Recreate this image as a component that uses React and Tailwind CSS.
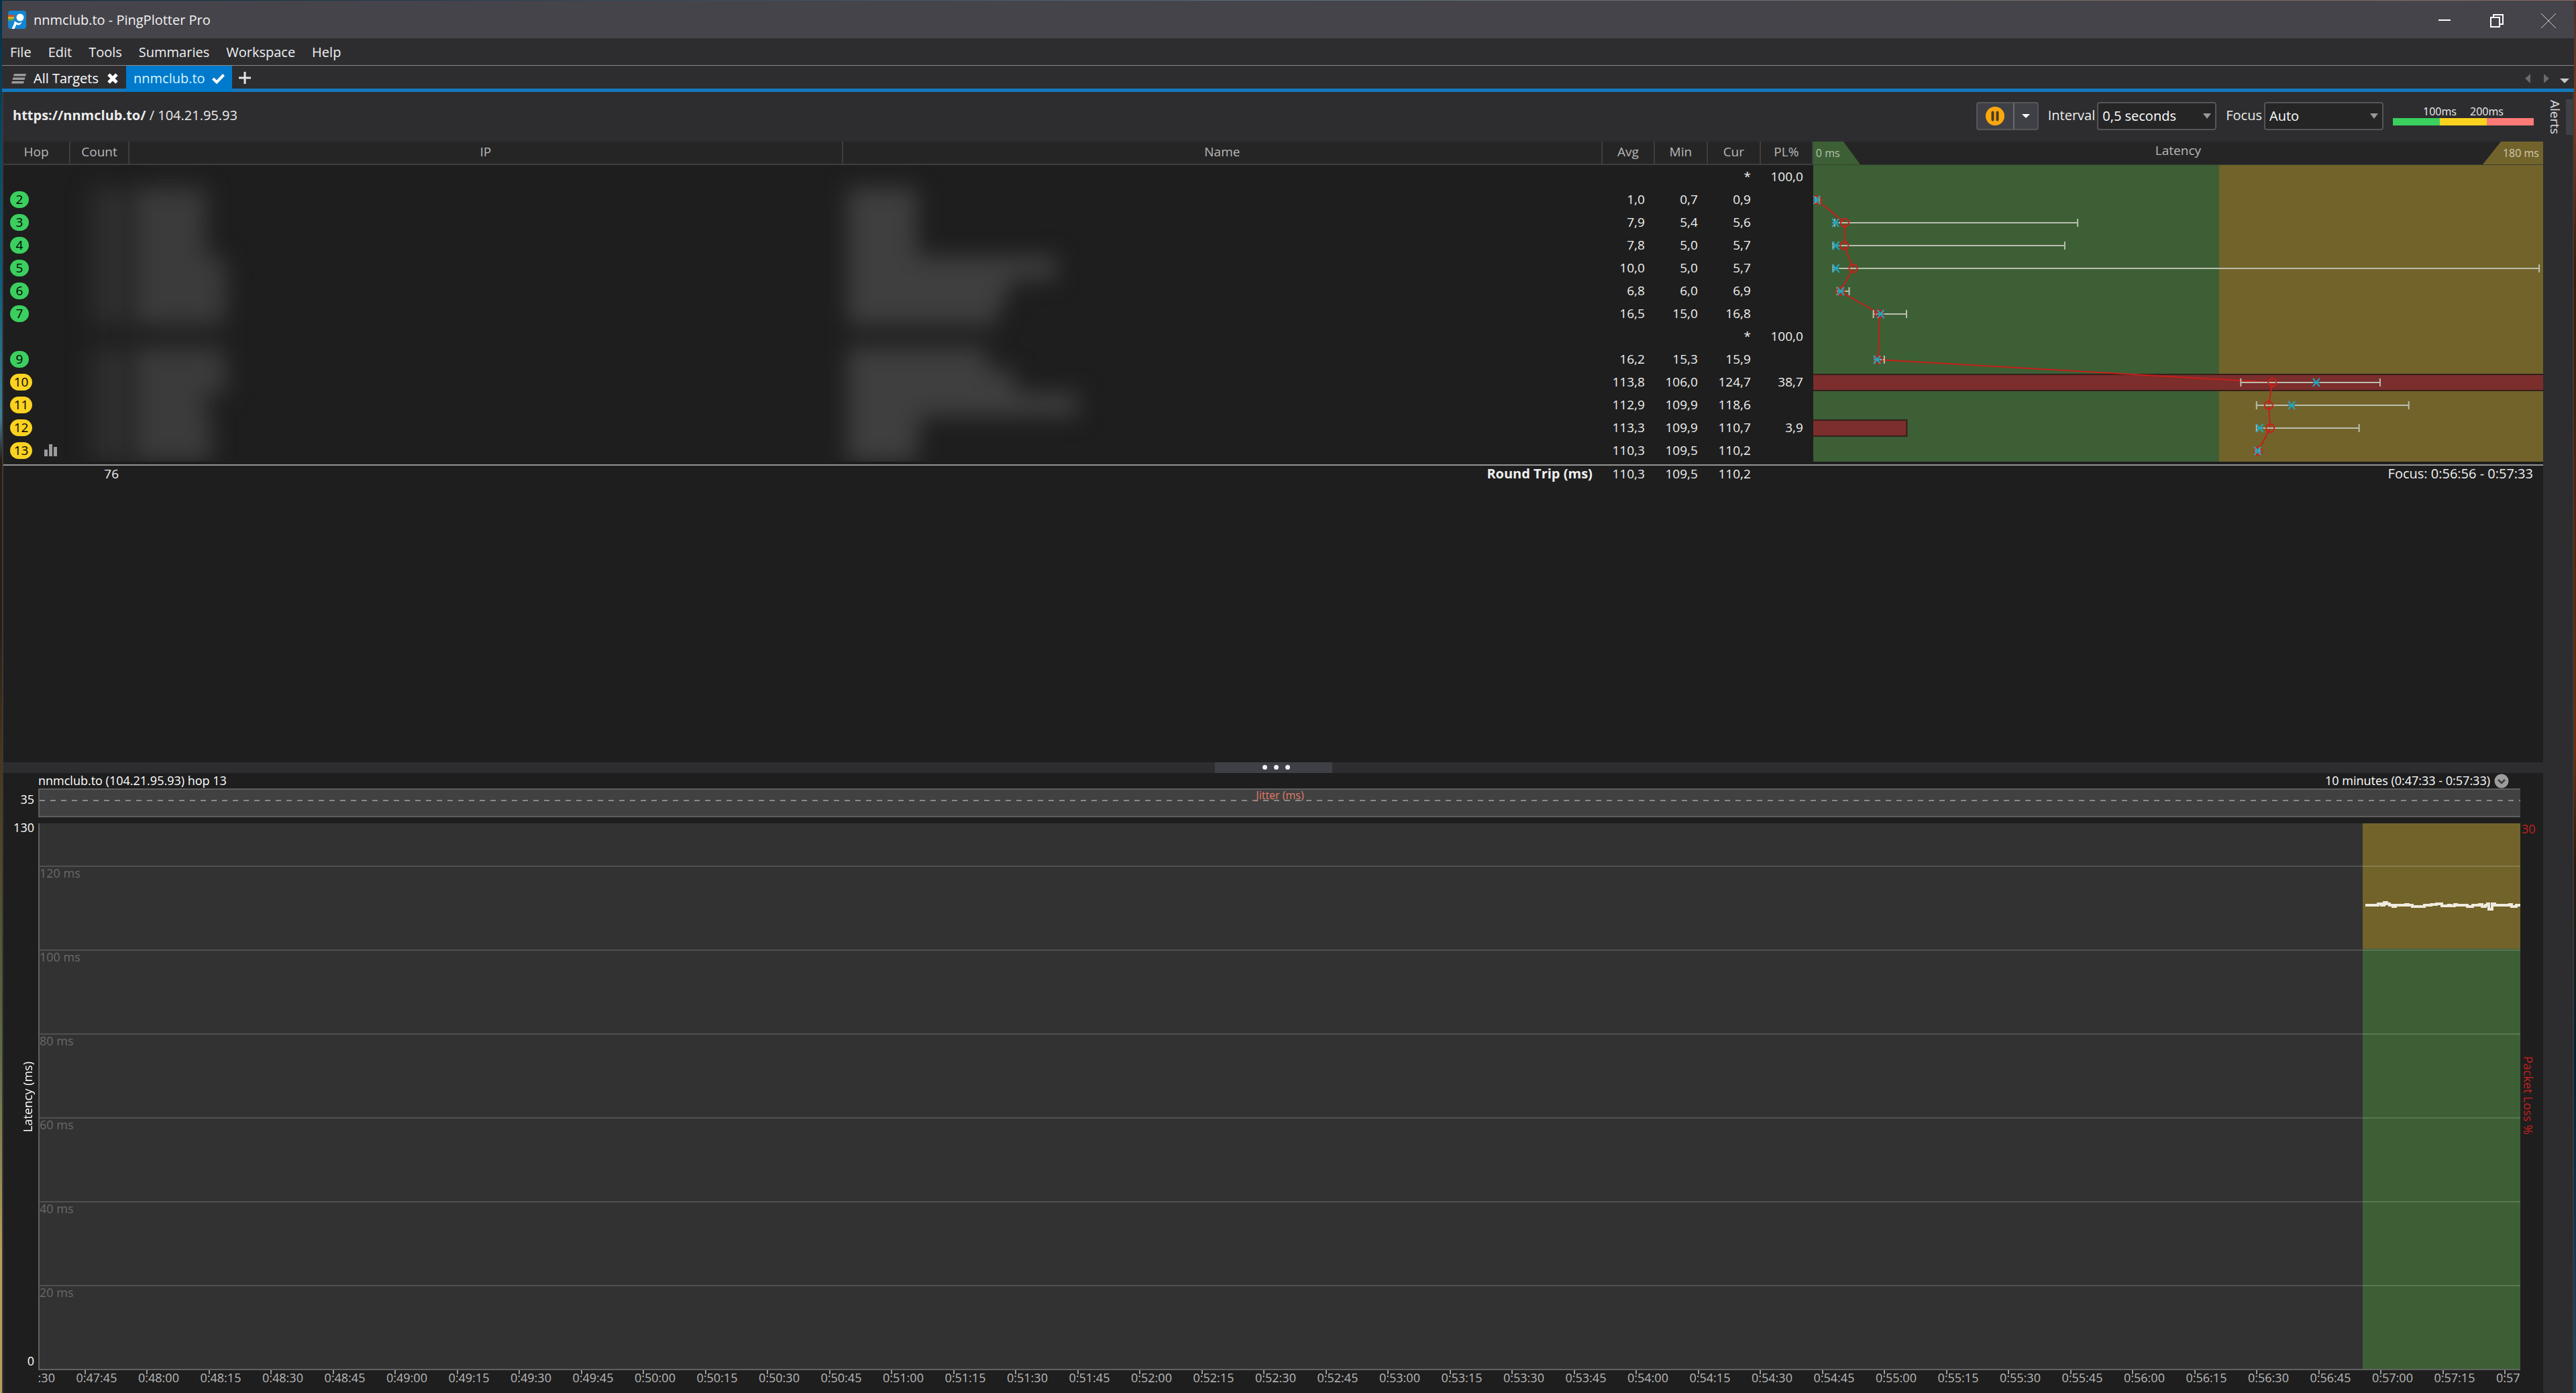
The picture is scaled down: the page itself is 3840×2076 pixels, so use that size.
import React from "react";

const HOPS = [
  { n: null, cur: "*", pl: "100,0" },
  { n: 2, avg: "1,0", min: "0,7", cur: "0,9", max: 1.7 },
  { n: 3, avg: "7,9", min: "5,4", cur: "5,6", max: 65.6 },
  { n: 4, avg: "7,8", min: "5,0", cur: "5,7", max: 62.4 },
  { n: 5, avg: "10,0", min: "5,0", cur: "5,7", max: 179.9 },
  { n: 6, avg: "6,8", min: "6,0", cur: "6,9", max: 9 },
  { n: 7, avg: "16,5", min: "15,0", cur: "16,8", max: 23.2 },
  { n: null, cur: "*", pl: "100,0" },
  { n: 9, avg: "16,2", min: "15,3", cur: "15,9", max: 17.7 },
  { n: 10, avg: "113,8", min: "106,0", cur: "124,7", max: 140.5, pl: "38,7", loss: 100 },
  { n: 11, avg: "112,9", min: "109,9", cur: "118,6", max: 147.6 },
  { n: 12, avg: "113,3", min: "109,9", cur: "110,7", max: 135.3, pl: "3,9", loss: 13 },
  { n: 13, avg: "110,3", min: "109,5", cur: "110,2", max: 110.6, graph: true },
];

// Widths of the redacted values, one per hop row.
const HIDDEN_COUNT = [0, 56, 56, 56, 56, 56, 56, 0, 56, 56, 56, 56, 56];
const HIDDEN_IP = [0, 108, 108, 108, 136, 140, 136, 0, 136, 140, 108, 116, 116];
const HIDDEN_NAME = [0, 104, 104, 104, 312, 240, 224, 0, 208, 250, 344, 108, 104];

const ROW = 34;
const num = (s) => parseFloat(s.replace(",", "."));
const pct = (ms) => `${(ms / 180.8) * 100 - 0.06}%`;

const TIMES = Array.from({ length: 41 }, (_, i) => {
  const s = 47 * 60 + 30 + i * 15;
  return `0:${Math.floor(s / 60)}:${String(s % 60).padStart(2, "0")}`;
});

const GRID = [120, 100, 80, 60, 40, 20];

function Triangle({ className = "fill-[#999999]" }) {
  return (
    <svg width="12" height="8" viewBox="0 0 12 8" className={className} aria-hidden="true">
      <path d="M0 0h12L6 8z" />
    </svg>
  );
}

function TitleBar() {
  return (
    <header className="flex h-14 shrink-0 items-center bg-[#45444a] pl-[9px] text-[#f2f2f2]">
      <svg width="27" height="27" viewBox="0 0 27 27" aria-hidden="true">
        <rect width="27" height="27" rx="4" fill="#1585d3" />
        <path d="M0 6h10l-1 3H0z" fill="#c9502f" />
        <path d="M0 9h9v3H0z" fill="#d9b021" />
        <path d="M0 12h8l-1 3H0z" fill="#54a63a" />
        <circle cx="18" cy="10" r="5.5" fill="#fff" />
        <path d="M5.500 27L9 19L9.500 15.500L15 18.500Q18 19 20.500 16.500Q20 20.500 15.500 21.500L12.500 20.500L9.500 27z" fill="#fff" />
      </svg>
      <h1 className="pl-[11px] pt-0.5">nnmclub.to - PingPlotter Pro</h1>
      <div className="ml-auto flex h-full">
        <button aria-label="Minimize" className="grid w-[78px] place-items-center">
          <svg width="20" height="20" viewBox="0 0 20 20" className="stroke-white" fill="none"><path d="M1 11h18" strokeWidth="2" /></svg>
        </button>
        <button aria-label="Restore" className="grid w-[78px] place-items-center pt-1">
          <svg width="20" height="20" viewBox="0 0 20 20" className="stroke-white" fill="none" strokeWidth="2">
            <path d="M1 5h13v14H1zM5 5V1h14v14h-5" />
          </svg>
        </button>
        <button aria-label="Close" className="grid w-[76px] place-items-center pt-1">
          <svg width="22" height="22" viewBox="0 0 22 22" className="stroke-[#d0d0d0]" fill="none"><path d="M0 0l22 22M22 0L0 22" /></svg>
        </button>
      </div>
    </header>
  );
}

function Tabs() {
  return (
    <div className="flex h-[39px] shrink-0 border-b-[5px] border-[#1478bd] bg-[#2d2d30] text-white">
      <button className="flex w-[185px] items-center pl-3.5 pt-1 text-left">
        <svg width="22" height="15" viewBox="0 0 22 15" className="fill-[#9a9a9a]" aria-hidden="true">
          <path d="M4 0h18l-1 3.500H3zM2.500 5.500h18l-1 3.500h-18zM1 11h18l-1 3.500H0z" />
        </svg>
        <span className="flex-1 pl-[11px]">All Targets</span>
        <svg width="16" height="16" viewBox="0 0 16 16" className="mr-3 stroke-white" strokeWidth="5" aria-hidden="true">
          <path d="M2 2l12 12M14 2L2 14" />
        </svg>
      </button>
      <button className="-mb-[5px] flex w-[158px] items-center bg-[#007acc] pb-[5px] pl-[11px] pt-1 text-left text-[#d6f4ff]">
        <span className="flex-1">nnmclub.to</span>
        <svg width="19" height="15" viewBox="0 0 19 15" className="mr-[11px] stroke-white" strokeWidth="4" fill="none" aria-hidden="true">
          <path d="M1.500 7l5.500 5.500L17.500 1.500" />
        </svg>
      </button>
      <button aria-label="New tab" className="pl-2.5 pt-0.5">
        <svg width="18" height="18" viewBox="0 0 18 18" className="stroke-[#e6e6e6]" strokeWidth="3"><path d="M9 0v18M0 9h18" /></svg>
      </button>
      <div className="ml-auto flex items-center pr-[7px] pt-1">
        <button aria-label="Scroll left" className="pr-5">
          <svg width="8" height="14" viewBox="0 0 8 14" className="fill-[#6a6a6c]"><path d="M8 0v14L0 7z" /></svg>
        </button>
        <button aria-label="Scroll right" className="pr-4">
          <svg width="8" height="14" viewBox="0 0 8 14" className="fill-[#6a6a6c]"><path d="M0 0v14l8-7z" /></svg>
        </button>
        <button aria-label="Tab list" className="pt-1.5">
          <svg width="14" height="7" viewBox="0 0 14 7" className="fill-[#c8c8c8]"><path d="M0 0h14L7 7z" /></svg>
        </button>
      </div>
    </div>
  );
}

function Picker({ id, label, value }) {
  return (
    <div className="flex items-center gap-[3px]">
      <label htmlFor={id} className="pb-0.5">{label}</label>
      <div className="grid h-[42px] w-[178px] items-center">
        <select id={id} defaultValue={value} className="col-start-1 row-start-1 h-full w-full appearance-none rounded-sm border-2 border-[#55555a] bg-[#252526] pl-1.5 text-white">
          <option>{value}</option>
        </select>
        <span className="pointer-events-none col-start-1 row-start-1 mr-2 justify-self-end"><Triangle /></span>
      </div>
    </div>
  );
}

function Toolbar() {
  return (
    <div className="flex h-[74px] shrink-0 items-center bg-[#2d2d30] pb-0.5 pl-3.5 pr-3.5 text-[#ececec]">
      <p className="pb-0.5"><strong>https://nnmclub.to/</strong> / 104.21.95.93</p>
      <div className="ml-auto flex items-center gap-3.5">
        <div className="flex h-[42px] w-[93px] rounded-sm border-2 border-[#55555a] bg-[#3f3f46]">
          <button aria-label="Pause" className="grid flex-1 place-items-center">
            <svg width="28" height="28" viewBox="0 0 28 28">
              <circle cx="14" cy="14" r="14" fill="#fba70e" />
              <path d="M10.500 8.500v11M17.500 8.500v11" stroke="#4a3c22" strokeWidth="4" strokeLinecap="round" />
            </svg>
          </button>
          <button aria-label="Pause options" className="grid w-9 place-items-center border-l-2 border-[#6a6a70]">
            <svg width="12" height="6" viewBox="0 0 12 6" className="fill-white"><path d="M0 0h12L6 6z" /></svg>
          </button>
        </div>
        <Picker id="interval" label="Interval" value="0,5 seconds" />
        <Picker id="focus" label="Focus" value="Auto" />
        <div className="w-[210px] pb-1">
          <div className="flex justify-center text-base leading-5">
            <span className="w-[70px] text-center">100ms</span>
            <span className="w-[70px] text-center">200ms</span>
          </div>
          <div className="flex h-[11px]">
            <span className="flex-1 bg-[#3bcf5f]" />
            <span className="flex-1 bg-[#fbd220]" />
            <span className="flex-1 bg-[#fd7b76]" />
          </div>
        </div>
      </div>
    </div>
  );
}

function LatencyChart() {
  const rows = HOPS.map((h, i) => ({ ...h, y: i * ROW + ROW / 2 + 1 })).filter((h) => h.n);
  return (
    <svg width="100%" height={ROW * HOPS.length} className="block bg-[#3d5f35]" role="img" aria-label="Latency per hop">
      <rect x="55.6%" width="44.4%" height="100%" fill="#72632b" />
      {rows.filter((h) => h.loss).map((h) => (
        <rect key={h.n} x="-2" y={h.y - 12} width={h.loss === 100 ? "101%" : `${h.loss}%`} height="24" fill="#7b2e2c" stroke="#33201c" strokeWidth="2" />
      ))}
      {rows.slice(1).map((h, i) => (
        <line key={h.n} x1={pct(num(rows[i].avg))} y1={rows[i].y} x2={pct(num(h.avg))} y2={h.y} stroke="#c4201a" strokeWidth="2" />
      ))}
      {rows.map((h) => (
        <g key={h.n} strokeWidth="2" fill="none">
          <g stroke="#b9bfae">
            <line x1={pct(num(h.min))} x2={pct(h.max)} y1={h.y} y2={h.y} />
            <line x1={pct(num(h.min))} x2={pct(num(h.min))} y1={h.y - 6} y2={h.y + 6} />
            <line x1={pct(h.max)} x2={pct(h.max)} y1={h.y - 6} y2={h.y + 6} />
          </g>
          <circle cx={pct(num(h.avg))} cy={h.y} r="6" stroke="#cc201a" />
          <svg x={pct(num(h.cur))} y={h.y} overflow="visible">
            <path d="M-5 -6L5 6M5 -6L-5 6M-5 0H5" stroke="#27a5bd" />
          </svg>
        </g>
      ))}
    </svg>
  );
}

function Redacted({ widths, className }) {
  return (
    <div className="h-[442px] overflow-y-clip">
      <div className={`flex flex-col blur-[17px] ${className}`}>
        {widths.map((w, i) => (
          <span key={i} className="h-[34px] bg-current" style={{ width: w }} />
        ))}
      </div>
    </div>
  );
}

const HEAD = "border-b-2 border-r-2 border-[#3e3e41] p-0 pb-1 font-normal leading-7";
const NUM = "pr-[15px] text-right";

function HopTable() {
  return (
    <table className="w-full table-fixed border-separate border-spacing-0 text-[19px] text-[#f0f0f0]">
      <colgroup>
        <col className="w-[100px]" />
        <col className="w-[88px]" />
        <col className="w-[28.1%]" />
        <col className="w-[29.9%]" />
        <col className="w-[78px]" />
        <col className="w-[79px]" />
        <col className="w-[79px]" />
        <col className="w-[78px]" />
        <col />
      </colgroup>
      <thead>
        <tr className="h-[35px] bg-[#252526] text-[#b8b8b8]">
          {["Hop", "Count", "IP", "Name", "Avg", "Min", "Cur", "PL%"].map((t) => (
            <th key={t} className={HEAD}>{t}</th>
          ))}
          <th className="border-b border-[#34402e] p-0 font-normal">
            <div className="flex h-[34px] items-center justify-between">
              <span className="w-[90px] bg-[#3d5f35] pl-1 text-left text-base leading-[34px] text-[#b4c4ae] [clip-path:polygon(0_0,45px_0,70px_100%,0_100%)]">0 ms</span>
              <span className="pb-2">Latency</span>
              <span className="w-[90px] bg-[#72632b] pr-1.5 text-right text-base leading-[34px] text-[#d2cab0] [clip-path:polygon(27px_0,100%_0,100%_100%,0_100%)]">180 ms</span>
            </div>
          </th>
        </tr>
      </thead>
      <tbody>
        {HOPS.map((h, i) => (
          <tr key={i} className="h-[34px]">
            <td className="p-0">
              {h.n && (
                <div className="flex items-center gap-[18px] pl-2.5">
                  <span className={h.n > 9 ? "h-[25px] w-[33px] rounded-full bg-[#fbd220] text-center leading-6 text-black" : "h-[25px] w-7 rounded-full bg-[#3bcf5f] text-center leading-6 text-black"}>{h.n}</span>
                  {h.graph && (
                    <svg width="19" height="18" viewBox="0 0 19 18" className="fill-[#9a9a9a]" aria-label="Graphed">
                      <path d="M0 8h5v10H0zM7 0h5v18H7zM14 4h5v14h-5z" />
                    </svg>
                  )}
                </div>
              )}
            </td>
            {i === 0 && (
              <>
                <td rowSpan={13} className="p-0 align-top"><Redacted widths={HIDDEN_COUNT} className="items-end text-[#2f2f2f]" /></td>
                <td rowSpan={13} className="p-0 align-top"><Redacted widths={HIDDEN_IP} className="pl-1.5 text-[#3b3b3b]" /></td>
                <td rowSpan={13} className="p-0 align-top"><Redacted widths={HIDDEN_NAME} className="pl-1.5 text-[#3f3f3f]" /></td>
              </>
            )}
            <td className={`p-0 ${NUM}`}>{h.avg}</td>
            <td className={`p-0 ${NUM}`}>{h.min}</td>
            <td className={`p-0 ${NUM}`}>{h.cur}</td>
            <td className={`p-0 ${NUM}`}>{h.pl}</td>
            {i === 0 && <td rowSpan={13} className="p-0 align-top"><LatencyChart /></td>}
          </tr>
        ))}
        <tr><td colSpan={9} className="h-[6px] border-b-2 border-[#949494] p-0" /></tr>
      </tbody>
      <tfoot>
        <tr className="leading-6">
          <td className="p-0" />
          <td className="p-0 pr-4 text-right">76</td>
          <td className="p-0" />
          <th className={`p-0 text-[20px] font-bold ${NUM}`}>Round Trip (ms)</th>
          <td className={`p-0 ${NUM}`}>110,3</td>
          <td className={`p-0 ${NUM}`}>109,5</td>
          <td className={`p-0 ${NUM}`}>110,2</td>
          <td className="p-0" />
          <td className={`p-0 text-[20px] ${NUM}`}>Focus: 0:56:56 - 0:57:33</td>
        </tr>
      </tfoot>
    </table>
  );
}

function Timeline() {
  return (
    <section className="flex flex-1 flex-col text-[18px] text-white">
      <div className="flex h-[23px] shrink-0 items-center justify-between pl-[52px] pr-[51px] leading-5">
        <h2 className="pb-0.5">nnmclub.to (104.21.95.93) hop 13</h2>
        <button className="flex items-center gap-1.5">
          <span className="pb-0.5">10 minutes (0:47:33 - 0:57:33)</span>
          <svg width="22" height="22" viewBox="0 0 22 22" aria-hidden="true">
            <circle cx="11" cy="11" r="10.5" fill="#9c9c9c" />
            <path d="M6 9l5 5 5-5" fill="none" stroke="#3a3a3a" strokeWidth="2.500" />
          </svg>
        </button>
      </div>
      <div className="grid flex-1 grid-cols-[52px_1fr_34px] grid-rows-[43px_9px_1fr_34px]">
        <span className="pr-1.5 pt-1 text-right">35</span>
        <div className="grid h-[43px] border-y-2 border-l-2 border-[#5e5e5e] bg-[#414141]">
          <svg width="100%" height="39" className="col-start-1 row-start-1" aria-hidden="true">
            <line x1="0" x2="100%" y1="16" y2="16" stroke="#8a8a8a" strokeWidth="2" strokeDasharray="8 8" />
          </svg>
          <span className="col-start-1 row-start-1 justify-self-center text-base leading-4 text-[#e27c68]">Jitter (ms)</span>
        </div>
        <span />

        <div className="col-span-3" />

        <div className="flex flex-col items-end justify-between pr-1.5">
          <span className="h-6 leading-3">130</span>
          <span className="rotate-180 leading-5 [writing-mode:vertical-rl]">Latency (ms)</span>
          <span className="h-6 leading-5">0</span>
        </div>
        <div className="grid border-b-2 border-l-2 border-[#616161] bg-[#323232]">
          <div className="col-start-1 row-start-1 ml-auto flex w-[235px] flex-col">
            <div className="flex h-[23%] items-center bg-[#72632b]">
              <svg width="235" height="20" viewBox="0 0 235 20" aria-hidden="true" className="mt-[57px]">
                <path
                  d="M4 10H23V8h5v2h4V6h4v2h4v2h5v2h4v-2h15v-1h4v1h6v2h18v-2h10V9h8V8h8v3h10v-1h3v1h6v-2h3v1h16v2h8v-2h10V9h4v3h5v-2h3V8h2v8h5V8h4v2h22V9h3v3h7v-2h9"
                  fill="none" stroke="#efeade" strokeWidth="4"
                />
              </svg>
            </div>
            <div className="flex-1 bg-[#3d5f35]" />
          </div>
          <div className="col-start-1 row-start-1 grid grid-rows-[10fr_20fr_20fr_20fr_20fr_20fr_20fr]">
            <span />
            {GRID.map((g) => (
              <div key={g} className="border-t-2 border-white/15 leading-[18px] text-[#696969]">{g} ms</div>
            ))}
          </div>
        </div>
        <div className="flex flex-col items-start justify-between pl-0.5 text-[#c4201c]">
          <span className="h-5 leading-4">30</span>
          <span className="leading-5 [writing-mode:vertical-rl]">Packet Loss %</span>
          <span className="h-6" />
        </div>

        <span />
        <div className="flex overflow-hidden text-[#b9b9b9]">
          {TIMES.map((t) => (
            <div key={t} className="w-[2.5%] shrink-0 first:-ml-9">
              <div className="ml-3 h-1.5 w-0.5 bg-[#9a9a9a]" />
              <div className="-mt-1 leading-[18px]">{t}</div>
            </div>
          ))}
        </div>
        <span />
      </div>
    </section>
  );
}

export default function App() {
  return (
    <div className="flex h-screen flex-col bg-[#1e1e1e] font-['Open_Sans','Noto_Sans',sans-serif] text-[20px] leading-6">
      <div className="h-px shrink-0 bg-linear-to-r from-[#06283f] via-[#5a6f7c] to-[#8a6a5c]" />
      <div className="flex min-h-0 flex-1">
        <div className="w-[3px] shrink-0 bg-[linear-gradient(#03304a,#0a5f7f_20%,#3f8097_30%,#2a1c14_33%,#2a1c14_45%,#4a3518_54%,#5c6b45_75%,#b89f5a_90%)]" />
        <div className="flex min-w-0 flex-1 flex-col">
          <TitleBar />
          <nav className="flex h-[41px] shrink-0 items-center gap-[25px] border-b border-[#8a8a8a] bg-[#2d2d30] pl-3 pt-0.5 text-[#f0f0f0]">
            {["File", "Edit", "Tools", "Summaries", "Workspace", "Help"].map((m) => (
              <button key={m}>{m}</button>
            ))}
          </nav>
          <Tabs />
          <div className="flex min-h-0 flex-1 border-x-2 border-[#3a3a3c]">
            <main className="flex min-w-0 flex-1 flex-col">
              <Toolbar />
              <div className="h-[925px] shrink-0"><HopTable /></div>
              <div className="flex h-4 shrink-0 justify-center bg-[#2d2d30]">
                <div className="flex w-[175px] items-center justify-center gap-2.5 bg-[#3f3f46] pb-0.5 pl-2">
                  <i className="size-[7px] rounded-full bg-[#f0f0f8]" />
                  <i className="size-[7px] rounded-full bg-[#f0f0f8]" />
                  <i className="size-[7px] rounded-full bg-[#f0f0f8]" />
                </div>
              </div>
              <Timeline />
            </main>
            <aside className="flex w-11 shrink-0 justify-end bg-[#2d2d30] pt-[11px]">
              <button className="h-[53px] border-r-[10px] border-[#3f3f46] pr-1 text-[19px] leading-6 text-[#e0e0e0] [writing-mode:vertical-rl]">Alerts</button>
            </aside>
          </div>
        </div>
        <div className="w-[3px] shrink-0 bg-[linear-gradient(#4a3030,#7a3a20_8%,#3a1a08_20%,#6b2f0a_54%,#2a1a0c_62%,#052030_76%,#1f4a68)]" />
      </div>
    </div>
  );
}
